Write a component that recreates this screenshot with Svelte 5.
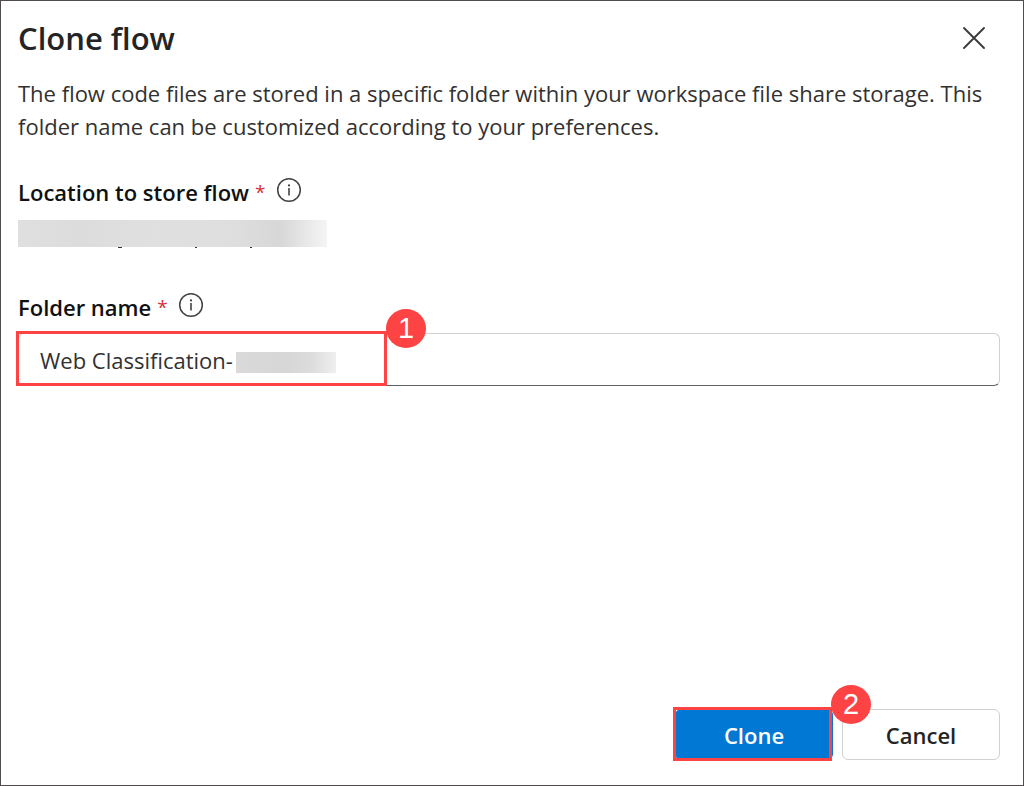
<script>
  let folder = $state('Web Classification-');
</script>

{#snippet info(label)}
  <button class="info" type="button" aria-label={label}>
    <svg viewBox="0 0 26 26" width="26" height="26" aria-hidden="true">
      <circle cx="13" cy="13" r="11.3" fill="none" stroke="#424242" stroke-width="1.5" />
      <circle cx="13" cy="8.4" r="1.1" fill="#424242" />
      <path d="M13 11v7.5" stroke="#424242" stroke-width="1.6" />
    </svg>
  </button>
{/snippet}

<main class="dialog" role="dialog" aria-labelledby="title">
  <header>
    <h1 id="title">Clone flow</h1>
    <button class="close" type="button" aria-label="Close">
      <svg viewBox="0 0 24 24" width="24" height="24" aria-hidden="true">
        <path d="M2 2l20 20M22 2L2 22" stroke="#3b3b3b" stroke-width="1.9" stroke-linecap="round" />
      </svg>
    </button>
  </header>

  <p>
    The flow code files are stored in a specific folder within your workspace file share storage. This
    folder name can be customized according to your preferences.
  </p>

  <section class="location">
    <div class="label">
      <span>Location to store flow</span><span class="star">*</span>{@render info('About the location')}
    </div>
    <div class="hidden-path">
      <svg viewBox="0 0 309 2" width="309" height="2" aria-hidden="true">
        <path d="M100 .5h4M177 .5h2M232 .5h2" stroke="#333" />
      </svg>
    </div>
  </section>

  <section class="folder">
    <div class="label">
      <label for="folder">Folder name</label><span class="star">*</span>{@render info('About the folder name')}
    </div>
    <div class="field">
      <input id="folder" type="text" bind:value={folder} />
      <span class="hidden-name"></span>
      <span class="frame name-frame"><span class="badge">1</span></span>
    </div>
  </section>

  <footer>
    <div class="action">
      <button class="primary" type="button">Clone</button>
      <span class="frame clone-frame"><span class="badge">2</span></span>
    </div>
    <button class="secondary" type="button">Cancel</button>
  </footer>
</main>

<style>
  :global(body) {
    margin: 0;
    background: #fff;
  }

  .dialog {
    box-sizing: border-box;
    min-height: 100vh;
    display: flex;
    flex-direction: column;
    padding: 15px 23px 25px 17px;
    border: 1px solid #504b4d;
    background: #fff;
    color: #323130;
    font: 22px/33px 'Segoe UI', 'Open Sans', sans-serif;
  }

  button,
  input {
    font: inherit;
    color: inherit;
  }

  header {
    display: flex;
    justify-content: space-between;
    align-items: center;
    padding-right: 14px;
  }

  h1 {
    margin: 0;
    color: #242424;
    font-size: 31px;
    font-weight: 600;
    line-height: 44px;
  }

  .close,
  .info {
    display: flex;
    padding: 0;
    border: 0;
    background: none;
  }

  p {
    margin: 17px 0 0;
  }

  .location {
    margin-top: 33px;
  }

  .folder {
    margin-top: 44px;
  }

  .label {
    display: flex;
    align-items: center;
    gap: 6px;
    height: 33px;
    color: #111;
    font-weight: 600;
  }

  .star {
    color: #d13438;
    font-size: 19px;
    font-weight: 400;
  }

  .info {
    margin: 0 0 5px 4px;
  }

  .hidden-path {
    position: relative;
    width: 309px;
    height: 27px;
    margin-top: 11px;
    background: linear-gradient(90deg, #dfdfdf, #dcdcdc 20%, #e0e0e0 45%, #dedede 70%, #d7d7d7 85%, #f5f5f5);
  }

  .hidden-path svg {
    position: absolute;
    top: 100%;
    left: 0;
  }

  .field {
    position: relative;
    margin-top: 9px;
  }

  input {
    display: block;
    box-sizing: border-box;
    width: 100%;
    height: 53px;
    padding: 0 20px 0 21px;
    border: 1px solid #d1d1d1;
    border-bottom-color: #616161;
    border-radius: 6px;
    outline: 0;
    background: #fff;
  }

  .hidden-name {
    position: absolute;
    top: 19px;
    left: 218px;
    width: 100px;
    height: 21px;
    background: linear-gradient(90deg, #dadada, #d6d6d6 50%, #dcdcdc 75%, #efefef);
  }

  .frame {
    position: absolute;
    box-sizing: border-box;
    border: 3px solid #fd4344;
    pointer-events: none;
  }

  .name-frame {
    top: -2px;
    left: -2px;
    width: 371px;
    height: 55px;
  }

  .clone-frame {
    inset: -2px 1px -1px -2px;
  }

  .badge {
    position: absolute;
    top: -25px;
    right: -42px;
    width: 40px;
    height: 39px;
    border-radius: 50%;
    background: #fd4344;
    color: #fff;
    font: 29px/39px 'Liberation Sans', Arial, sans-serif;
    text-align: center;
  }

  footer {
    display: flex;
    justify-content: flex-end;
    gap: 9px;
    margin-top: auto;
  }

  .action {
    position: relative;
    z-index: 1;
  }

  .primary,
  .secondary {
    box-sizing: border-box;
    width: 158px;
    height: 51px;
    padding: 2px 0 0;
    border: 1px solid #d1d1d1;
    border-radius: 6px;
    background: #fff;
    color: #242424;
    font-weight: 600;
  }

  .primary {
    border-color: #0078d4;
    background: #0078d4;
    color: #fff;
  }
</style>
